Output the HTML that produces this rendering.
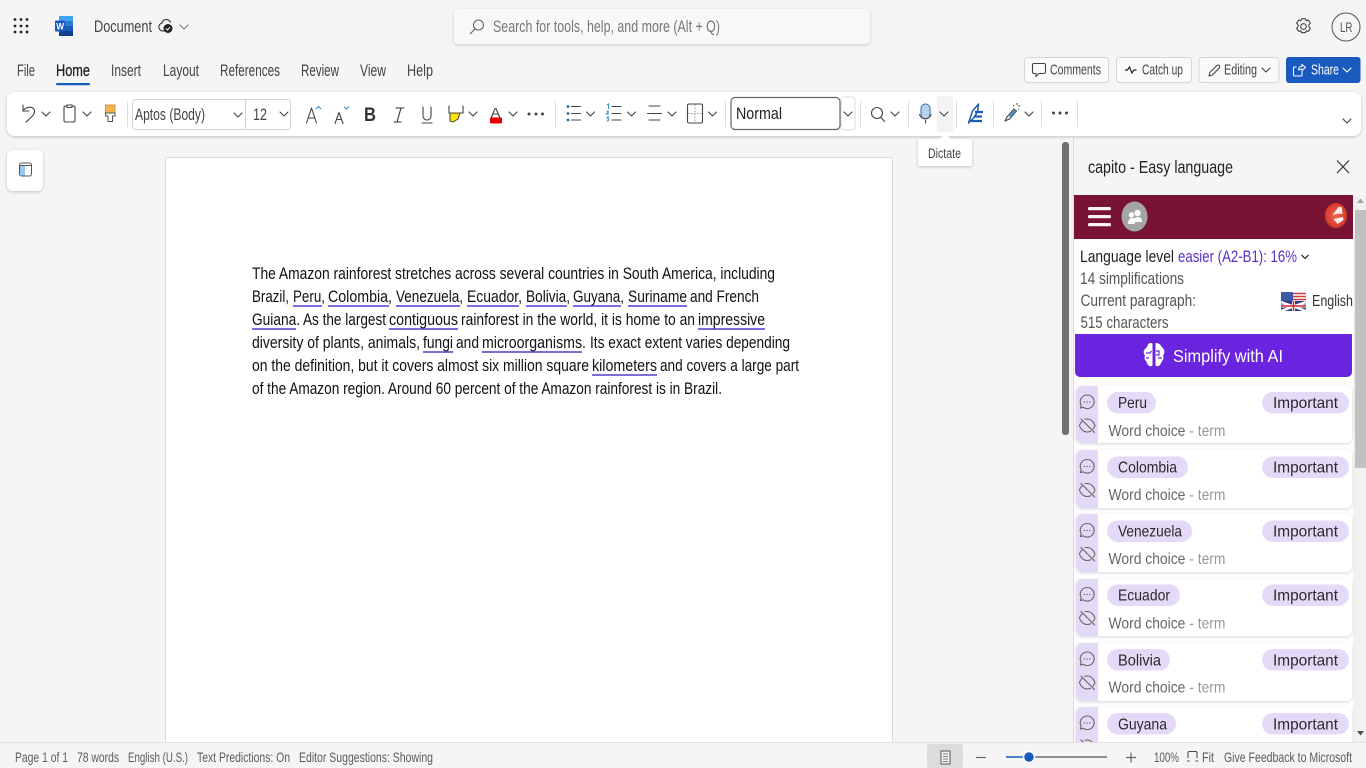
<!DOCTYPE html>
<html lang="en"><head><meta charset="utf-8"><title>Document</title>
<style>
html,body{margin:0;padding:0;width:1366px;height:768px;overflow:hidden;background:#f5f5f5}
svg{display:block;position:absolute;left:0;top:0}
text{font-family:"Liberation Sans",sans-serif;fill:#333;font-size:15px}
.d text,text.d{font-size:16.8px;fill:#111}
.p text{font-size:16.5px;fill:#555}
.s text{font-size:14px;fill:#5c5c5c}
.i{fill:none;stroke:#444;stroke-width:1.1;stroke-linecap:round;stroke-linejoin:round}
.ch{fill:none;stroke:#444;stroke-width:1.1;stroke-linecap:round;stroke-linejoin:round}
</style></head><body>
<svg width="1366" height="768" viewBox="0 0 1366 768" xmlns="http://www.w3.org/2000/svg">
<defs>
<filter id="sh" x="-5%" y="-30%" width="110%" height="170%"><feDropShadow dx="0" dy="1" stdDeviation="1.6" flood-color="#000" flood-opacity=".22"/></filter>
<filter id="sc" x="-10%" y="-20%" width="120%" height="150%"><feDropShadow dx="0" dy="1" stdDeviation="1.6" flood-color="#000" flood-opacity=".18"/></filter>
<radialGradient id="lg" cx=".5" cy=".5" r=".6"><stop offset="0" stop-color="#ee6a50"/><stop offset="1" stop-color="#d22f25"/></radialGradient>
<path id="c" d="M-4 -2L0 2L4 -2"/>
<g id="cardicons" fill="none" stroke="#666" stroke-width="1.1" stroke-linecap="round" stroke-linejoin="round">
<path d="M1087 395a6.800 6.800 0 1 1-3.700 12.300l-2.900.8.800-2.900a6.800 6.800 0 0 1 5.800-10.200z"/>
<path d="M1084 402h.6M1086.800 402h.6M1089.600 402h.6"/>
<path d="M1081 419l13.500 13.500M1082 421.500c-1.200 1.100-2.100 2.400-2.600 4 1.300 3.800 4.300 6.500 7.800 6.500 1.300 0 2.500-.3 3.600-.9M1085 419.200c.7-.2 1.400-.2 2.200-.2 3.500 0 6.500 2.600 7.800 6.500-.4 1.300-1.100 2.500-2 3.500"/>
</g>
</defs>

<!-- top bar -->
<g fill="#222"><circle cx="15" cy="19.500" r="1.400"/><circle cx="21" cy="19.500" r="1.400"/><circle cx="27" cy="19.500" r="1.400"/><circle cx="15" cy="26" r="1.400"/><circle cx="21" cy="26" r="1.400"/><circle cx="27" cy="26" r="1.400"/><circle cx="15" cy="32" r="1.400"/><circle cx="21" cy="32" r="1.400"/><circle cx="27" cy="32" r="1.400"/></g>
<rect x="59" y="16" width="14" height="20" rx="1.500" fill="#2b7cd3"/><rect x="59" y="16" width="14" height="5" fill="#41a5ee"/><rect x="59" y="26" width="14" height="5" fill="#185abd"/><rect x="59" y="31" width="14" height="5" fill="#103f91"/>
<rect x="55" y="20.500" width="10" height="11" rx="1" fill="#185abd"/><text x="56.200" y="29.500" style="fill:#fff;font-size:9px;font-weight:bold" textLength="7.800" lengthAdjust="spacingAndGlyphs">W</text>
<text x="94" y="32" textLength="58" lengthAdjust="spacingAndGlyphs" style="font-size:16.500px;fill:#444">Document</text>
<path class="i" d="M165 31h-2.500a4 4 0 0 1-.5-7.900 4.500 4.500 0 0 1 8.500-.9" style="stroke:#333"/><circle cx="168" cy="28.500" r="4.500" fill="#222"/><path d="M166 28.500l1.500 1.500 2.500-2.800" stroke="#fff" fill="none" stroke-width="1"/>
<use href="#c" x="184" y="27" class="ch" style="stroke:#777"/>

<rect x="454" y="9" width="416" height="35" rx="4" fill="#f8f8f8" filter="url(#sc)"/>
<circle cx="478.500" cy="25" r="5" class="i" style="stroke:#666"/><path class="i" style="stroke:#666" d="M475 29l-4.700 4.700"/>
<text x="493" y="32" textLength="227" lengthAdjust="spacingAndGlyphs" style="fill:#777;font-size:16.500px">Search for tools, help, and more (Alt + Q)</text>

<g transform="translate(1303.500 26.500)" class="i"><circle r="2.800"/><path d="M-2 -7.700h4l.7 2 1.900-.8 2.300 3.100-1.500 1.600.0 2.100 1.500 1.600-2.300 3.100-1.900-.8-.7 2h-4l-.7-2-1.900.8-2.300-3.100 1.500-1.600v-2.100l-1.500-1.600 2.300-3.100 1.900.8z"/></g>
<circle cx="1346" cy="27" r="14" fill="none" stroke="#555"/>
<text x="1340" y="32" textLength="12.500" lengthAdjust="spacingAndGlyphs" style="font-size:14px;fill:#555">LR</text>

<!-- tabs -->
<g>
<text x="17" y="76" textLength="18" lengthAdjust="spacingAndGlyphs" style="font-size:16.500px;fill:#444">File</text>
<text x="56" y="76" textLength="34" lengthAdjust="spacingAndGlyphs" style="font-size:16.500px;fill:#222;stroke:#222;stroke-width:.3">Home</text>
<text x="111" y="76" textLength="30" lengthAdjust="spacingAndGlyphs" style="font-size:16.500px;fill:#444">Insert</text>
<text x="163" y="76" textLength="36" lengthAdjust="spacingAndGlyphs" style="font-size:16.500px;fill:#444">Layout</text>
<text x="220" y="76" textLength="60" lengthAdjust="spacingAndGlyphs" style="font-size:16.500px;fill:#444">References</text>
<text x="301" y="76" textLength="38" lengthAdjust="spacingAndGlyphs" style="font-size:16.500px;fill:#444">Review</text>
<text x="360" y="76" textLength="26" lengthAdjust="spacingAndGlyphs" style="font-size:16.500px;fill:#444">View</text>
<text x="407" y="76" textLength="26" lengthAdjust="spacingAndGlyphs" style="font-size:16.500px;fill:#444">Help</text>
</g>
<rect x="56" y="83" width="34" height="2.200" rx="1" fill="#185abd"/>

<!-- action buttons -->
<g fill="#fafafa" stroke="#d6d6d6"><rect x="1024.500" y="57.500" width="84" height="25" rx="3"/><rect x="1116.500" y="57.500" width="75" height="25" rx="3"/><rect x="1199" y="57.500" width="80" height="25" rx="3"/></g>
<rect x="1286" y="57" width="74.500" height="26" rx="3" fill="#185abd"/>
<path class="i" d="M1034 64h10a1.500 1.500 0 0 1 1.500 1.500v7a1.500 1.500 0 0 1-1.500 1.500h-5l-3 3v-3h-2a1.500 1.500 0 0 1-1.500-1.500v-7a1.500 1.500 0 0 1 1.500-1.500z" transform="translate(0 -0.500)"/>
<text x="1050" y="74.500" textLength="51" lengthAdjust="spacingAndGlyphs" style="font-size:14.500px;fill:#444">Comments</text>
<path d="M1125 70h2.500l2-3 2.500 6 2-3h2.500" fill="none" stroke="#222" stroke-width="1.200"/>
<text x="1142" y="74.500" textLength="41" lengthAdjust="spacingAndGlyphs" style="font-size:14.500px;fill:#444">Catch up</text>
<path class="i" d="M1209 76l.8-3.500 7-7a1.700 1.700 0 0 1 2.500 2.500l-7 7z"/>
<text x="1224" y="74.500" textLength="33" lengthAdjust="spacingAndGlyphs" style="font-size:14.500px;fill:#444">Editing</text>
<use href="#c" x="1266" y="70" class="ch"/>
<path d="M1302 70v5a1 1 0 0 1-1 1h-6.500a1 1 0 0 1-1-1v-7a1 1 0 0 1 1-1h2M1298.500 69.500c0-2 1.500-3.300 3.500-3.300v-1.700l3.500 3-3.500 3v-1.500c-1.500 0-2.800.4-3.500 1.500" fill="none" stroke="#fff" stroke-width="1"/>
<text x="1311" y="74.500" textLength="28" lengthAdjust="spacingAndGlyphs" style="font-size:14.500px;fill:#fff">Share</text>
<use href="#c" x="1347" y="70" class="ch" style="stroke:#fff"/>

<!-- ribbon -->
<rect x="7" y="92" width="1354" height="44" rx="8" fill="#fff" filter="url(#sh)"/>
<path class="i" d="M23 105v6h6M23 111c3-4.500 10-5.500 11.500-.5 1 4-5 8-8.500 11.500"/>
<use href="#c" x="46" y="114" class="ch"/>
<rect x="64" y="106" width="11" height="16" rx="1.500" class="i"/><rect x="67" y="105" width="5" height="2.500" class="i" style="fill:#fff"/>
<use href="#c" x="87" y="114" class="ch"/>
<rect x="105.500" y="105" width="9.500" height="8" fill="#f5b556" stroke="#c98a2a" stroke-width=".8"/><path d="M105.500 113h9.500v3h-2.500v5.500h-4.500v-5.500h-2.500z" fill="#fff" stroke="#555"/>
<path d="M127.500 101v26" stroke="#ddd"/>
<rect x="132.500" y="99.500" width="158" height="30" rx="3" fill="#fff" stroke="#d4d4d4"/><path d="M245.500 100v29" stroke="#d4d4d4"/>
<text x="135" y="120" textLength="70" lengthAdjust="spacingAndGlyphs" style="font-size:16.500px;fill:#444">Aptos (Body)</text>
<use href="#c" x="238" y="115" class="ch"/>
<text x="253" y="120" textLength="14" lengthAdjust="spacingAndGlyphs" style="font-size:16.500px;fill:#444">12</text>
<use href="#c" x="284" y="114" class="ch"/>
<path class="i" d="M306.500 123l5-15 5 15M308.500 118h6"/><path d="M316 109l2.500-2.500 2.500 2.500" fill="none" stroke="#3a8fc7"/>
<path class="i" d="M335 123.500l4-11 4 11M336.500 119.500h5"/><path d="M344 106.500l2.500 2.500 2.500-2.500" fill="none" stroke="#3a8fc7"/>
<text x="364" y="121" textLength="12" lengthAdjust="spacingAndGlyphs" style="font-size:19px;font-weight:bold;fill:#333">B</text>
<path class="i" d="M396 108h8M394 122h7M401 108l-4 14" style="stroke:#333"/>
<path class="i" d="M423 107v9a4 4 0 0 0 8 0v-9M422 123h10"/>
<path class="i" d="M449 106v7h14v-7"/><path d="M450 113h10l-2 6-5 3-3-1z" fill="#ffe600" stroke="#444"/>
<use href="#c" x="473" y="114" class="ch"/>
<text x="490.500" y="117.500" textLength="10" lengthAdjust="spacingAndGlyphs" style="font-size:13.500px;fill:#444">A</text><rect x="490" y="117.500" width="12" height="6" rx="1" fill="#e60000"/>
<use href="#c" x="513" y="114" class="ch"/>
<g fill="#444"><circle cx="529" cy="114" r="1.500"/><circle cx="536" cy="114" r="1.500"/><circle cx="542.500" cy="114" r="1.500"/></g>
<path d="M555.500 101v26" stroke="#ddd"/>
<g fill="#1e6fa8"><circle cx="568" cy="106.500" r="1.400"/><circle cx="568" cy="113.500" r="1.400"/><circle cx="568" cy="120" r="1.400"/></g>
<path class="i" d="M571.500 106.500h9M571.500 113.500h9M571.500 120h9"/>
<use href="#c" x="590.500" y="114" class="ch"/>
<path d="M607 105l1.500-1v5M606.500 111.500c1-1 2.500 0 1.500 1l-1.500 1.500h2.500M606.500 117h2l-1 1.500c1.500 0 1.500 3-.9 2.500" fill="none" stroke="#3a8fc7" stroke-width="1.100"/>
<path class="i" d="M612 106.500h9M612 113.500h9M612 120h9"/>
<use href="#c" x="631.500" y="114" class="ch"/>
<path class="i" d="M649 106h11M647.500 113.500h14M649 120h11"/>
<use href="#c" x="672" y="114" class="ch"/>
<rect x="687.500" y="104" width="15" height="19" rx="1.500" class="i"/><path d="M688 113.500h14M695 104.500v18" stroke="#999" stroke-dasharray="1.500 1.500" fill="none"/>
<use href="#c" x="712.500" y="114" class="ch"/>
<path d="M725.500 101v26" stroke="#ddd"/>
<rect x="841" y="97" width="14" height="33" rx="3" fill="#fff" stroke="#ddd"/>
<rect x="731" y="97.500" width="109" height="32" rx="4" fill="#fff" stroke="#666" stroke-width="1.200"/>
<text x="736" y="119" textLength="46" lengthAdjust="spacingAndGlyphs" style="font-size:16.500px;fill:#222">Normal</text>
<use href="#c" x="848" y="114" class="ch"/>
<path d="M860.500 101v26" stroke="#ddd"/>
<circle cx="877" cy="113" r="5.500" class="i"/><path class="i" d="M881 117.500l3.500 4"/>
<use href="#c" x="895" y="114" class="ch"/>
<path d="M908.500 101v26" stroke="#ddd"/>
<rect x="921" y="104" width="9" height="15" rx="4.500" fill="#b7d3ec" stroke="#2b6cb8"/><path class="i" d="M919.500 114.500a6 6 0 0 0 11.500 0M925.500 120.500v2.500"/>
<rect x="937" y="96" width="16" height="36" fill="#f3f3f3"/>
<use href="#c" x="944" y="114" class="ch"/>
<path d="M956.500 101v26" stroke="#ddd"/>
<path d="M968.500 123l4-12 6-7-1 8-4 6z" fill="none" stroke="#1e5cb3" stroke-width="1.500" stroke-linejoin="round"/>
<path d="M975 112h8M974 116.500h8M971 121h11" fill="none" stroke="#1e5cb3" stroke-width="2.200"/>
<path d="M993.500 101v26" stroke="#ddd"/>
<path class="i" d="M1005 121l2-4 7-8 2.500 2-7 8z"/><path d="M1009 116l5-6 1.800 1.500-5 6z" fill="#3a8fc7"/><path d="M1017 103v2M1020 106h-2M1013 105l1 1M1018 109l1 .5" stroke="#444" fill="none"/>
<use href="#c" x="1029" y="114" class="ch"/>
<path d="M1041.500 101v26" stroke="#ddd"/>
<g fill="#444"><circle cx="1053.500" cy="113" r="1.500"/><circle cx="1060" cy="113" r="1.500"/><circle cx="1066.500" cy="113" r="1.500"/></g>
<path d="M1077.500 101v26" stroke="#ddd"/>
<use href="#c" x="1347" y="121" class="ch"/>

<!-- nav pane button -->
<rect x="7" y="150" width="36" height="41" rx="6" fill="#fff" filter="url(#sh)"/>
<rect x="19.500" y="163" width="12" height="13" rx="2" fill="#fff" stroke="#555"/><rect x="20" y="166" width="5" height="9.500" fill="#9cc8ee"/><path d="M20 165.500h11" stroke="#555"/>

<!-- page -->
<rect x="165.500" y="157.500" width="727" height="600" rx="2" fill="#fff" stroke="#dcdcdc"/>
<g class="d">
<text x="252" y="279" textLength="523" lengthAdjust="spacingAndGlyphs">The Amazon rainforest stretches across several countries in South America, including</text>
<text x="252" y="302" textLength="37" lengthAdjust="spacingAndGlyphs">Brazil,</text>
<text x="293" y="302" textLength="32" lengthAdjust="spacingAndGlyphs">Peru,</text>
<text x="328" y="302" textLength="64" lengthAdjust="spacingAndGlyphs">Colombia,</text>
<text x="396" y="302" textLength="67" lengthAdjust="spacingAndGlyphs">Venezuela,</text>
<text x="467" y="302" textLength="55" lengthAdjust="spacingAndGlyphs">Ecuador,</text>
<text x="526" y="302" textLength="44" lengthAdjust="spacingAndGlyphs">Bolivia,</text>
<text x="573" y="302" textLength="51" lengthAdjust="spacingAndGlyphs">Guyana,</text>
<text x="628" y="302" textLength="59" lengthAdjust="spacingAndGlyphs">Suriname</text>
<text x="690" y="302" textLength="69" lengthAdjust="spacingAndGlyphs">and French</text>
<text x="252" y="325" textLength="48" lengthAdjust="spacingAndGlyphs">Guiana.</text>
<text x="303" y="325" textLength="83" lengthAdjust="spacingAndGlyphs">As the largest</text>
<text x="389" y="325" textLength="69" lengthAdjust="spacingAndGlyphs">contiguous</text>
<text x="461" y="325" textLength="234" lengthAdjust="spacingAndGlyphs">rainforest in the world, it is home to an</text>
<text x="698" y="325" textLength="67" lengthAdjust="spacingAndGlyphs">impressive</text>
<text x="252" y="348" textLength="168" lengthAdjust="spacingAndGlyphs">diversity of plants, animals,</text>
<text x="423" y="348" textLength="30" lengthAdjust="spacingAndGlyphs">fungi</text>
<text x="456" y="348" textLength="23" lengthAdjust="spacingAndGlyphs">and</text>
<text x="482" y="348" textLength="104" lengthAdjust="spacingAndGlyphs">microorganisms.</text>
<text x="590" y="348" textLength="200" lengthAdjust="spacingAndGlyphs">Its exact extent varies depending</text>
<text x="252" y="371" textLength="337" lengthAdjust="spacingAndGlyphs">on the definition, but it covers almost six million square</text>
<text x="592" y="371" textLength="65" lengthAdjust="spacingAndGlyphs">kilometers</text>
<text x="660" y="371" textLength="139" lengthAdjust="spacingAndGlyphs">and covers a large part</text>
<text x="252" y="394" textLength="470" lengthAdjust="spacingAndGlyphs">of the Amazon region. Around 60 percent of the Amazon rainforest is in Brazil.</text>
</g>
<g stroke="#4f3fd0" stroke-width="1.500" fill="none">
<path d="M293 306h29M328 306h61M396 306h64M467 306h52M526 306h41M573 306h48M628 306h59"/>
<path d="M252 329h44M389 329h69M698 329h67"/>
<path d="M423 352h30M482 352h100"/>
<path d="M592 375h65"/>
</g>

<!-- doc scrollbar -->
<rect x="1062" y="142" width="7" height="293" rx="3" fill="#707070"/>
<path d="M1073.500 137v606" stroke="#dcdcdc"/>

<!-- tooltip -->
<rect x="918" y="139" width="54" height="27" rx="1.500" fill="#fff" filter="url(#sh)"/>
<path d="M945 133l6 6.500h-12z" fill="#fff"/>
<text x="928" y="158" textLength="33" lengthAdjust="spacingAndGlyphs" style="font-size:13.500px;fill:#444">Dictate</text>

<!-- side panel -->
<text x="1088" y="173" textLength="145" lengthAdjust="spacingAndGlyphs" style="font-size:17.500px;fill:#222">capito - Easy language</text>
<path d="M1337 160.500l12 12.500M1349 160.500l-12 12.500" fill="none" stroke="#333" stroke-width="1.200"/>
<rect x="1074" y="195" width="279" height="548" fill="#fff"/>
<rect x="1354" y="195" width="12" height="548" fill="#f1f1f1"/>
<rect x="1355" y="210" width="11" height="258" fill="#c1c1c1"/>
<path d="M1360.500 198.500l3.500 4.500h-7z" fill="#a3a3a3"/><path d="M1360.500 735.500l3.500-4.500h-7z" fill="#505050"/>
<rect x="1074" y="195" width="279" height="44" fill="#781334"/>
<g fill="#fff" opacity=".95"><rect x="1088" y="207" width="23" height="3.300" rx="1.600"/><rect x="1088" y="215" width="23" height="3.300" rx="1.600"/><rect x="1088" y="223" width="23" height="3.300" rx="1.600"/></g>
<ellipse cx="1134.500" cy="216.500" rx="13" ry="15" fill="#a5a5a5"/>
<circle cx="1137.500" cy="213" r="3.200" fill="#fff"/><circle cx="1131.500" cy="215" r="2.700" fill="#fff"/><path d="M1128 224c0-4 2-6 4-6s2 1 2 1 1-2 4-2 4 2 4 5h-7c0 1 0 2-.5 2z" fill="#fff"/>
<ellipse cx="1336" cy="215.500" rx="11" ry="12.500" fill="url(#lg)"/>
<path d="M1332.500 215l6.500-8.500 3 1 .5 6.500-4.500-.5zM1333.500 219l9.500-2 .5 3-6 4z" fill="#fdecea"/>

<text x="1080" y="262" textLength="94" lengthAdjust="spacingAndGlyphs" style="font-size:16.500px;fill:#222">Language level</text>
<text x="1178" y="262" textLength="119" lengthAdjust="spacingAndGlyphs" style="font-size:16.500px;fill:#5b2fc9">easier (A2-B1): 16%</text>
<path d="M1301.500 255l3.500 3.500 3.500-3.500" fill="none" stroke="#333" stroke-width="1.300"/>
<g class="p">
<text x="1080" y="284" textLength="104" lengthAdjust="spacingAndGlyphs">14 simplifications</text>
<text x="1080.500" y="306" textLength="115.500" lengthAdjust="spacingAndGlyphs">Current paragraph:</text>
<text x="1080.500" y="328" textLength="88" lengthAdjust="spacingAndGlyphs">515 characters</text>
</g>
<rect x="1281" y="292" width="25" height="19" fill="#fff"/>
<rect x="1281" y="292" width="12" height="9" fill="#3c5aa6"/>
<path d="M1293 293.500h13M1293 296.500h13M1293 299.500h13" stroke="#d23b3b" stroke-width="1.500"/>
<rect x="1281" y="301" width="25" height="10" fill="#2a3a85"/>
<path d="M1281 311l25-9M1306 311l-25-9" stroke="#fff" stroke-width="2.500"/><path d="M1293.500 301v10M1281 306h25" stroke="#fff" stroke-width="3"/><path d="M1293.500 301v10M1281 306h25" stroke="#d0232b" stroke-width="1.500"/>
<text x="1312" y="306" textLength="41" lengthAdjust="spacingAndGlyphs" style="font-size:16px;fill:#333">English</text>

<path d="M1075 334h277v38a5 5 0 0 1-5 5h-267a5 5 0 0 1-5-5z" fill="#6a23df"/>
<path d="M1151.500 343c-5 0-3 3-5 4.500-3.500 3-3.500 5-1.500 8-1.500 4 1 5 1.500 6.500 1 3 3 5 5 4 1 0 1-1 1-2v-19c0-1 0-2-1-2zM1155.500 343c5 0 5 3 7 4.500 2.500 3 2.500 5 .5 8 1.500 4-1 5-1.500 6.500-1 3-3 5-5 4-1 0-1-1-1-2v-19c0-1 0-2 0-2z" fill="#fff"/>
<path d="M1146 353h4l1.500-2M1146 358h3M1156 351h3v4h-3M1162 358h-4" stroke="#6a23df" stroke-width="1.200" fill="none"/>
<text x="1173" y="362" textLength="110" lengthAdjust="spacingAndGlyphs" style="font-size:17.500px;fill:#fff">Simplify with AI</text>

<!-- cards -->
<g>
<rect x="1076" y="386" width="276" height="57" rx="6" fill="#fff" filter="url(#sc)"/><path d="M1082 386h16v57h-16a6 6 0 0 1-6-6v-45a6 6 0 0 1 6-6z" fill="#e4daf7"/>
<rect x="1076" y="450" width="276" height="58" rx="6" fill="#fff" filter="url(#sc)"/><path d="M1082 450h16v58h-16a6 6 0 0 1-6-6v-46a6 6 0 0 1 6-6z" fill="#e4daf7"/>
<rect x="1076" y="514" width="276" height="58" rx="6" fill="#fff" filter="url(#sc)"/><path d="M1082 514h16v58h-16a6 6 0 0 1-6-6v-46a6 6 0 0 1 6-6z" fill="#e4daf7"/>
<rect x="1076" y="579" width="276" height="57" rx="6" fill="#fff" filter="url(#sc)"/><path d="M1082 579h16v57h-16a6 6 0 0 1-6-6v-45a6 6 0 0 1 6-6z" fill="#e4daf7"/>
<rect x="1076" y="643" width="276" height="58" rx="6" fill="#fff" filter="url(#sc)"/><path d="M1082 643h16v58h-16a6 6 0 0 1-6-6v-46a6 6 0 0 1 6-6z" fill="#e4daf7"/>
<rect x="1076" y="707" width="276" height="58" rx="6" fill="#fff" filter="url(#sc)"/><path d="M1082 707h16v58h-16a6 6 0 0 1-6-6v-46a6 6 0 0 1 6-6z" fill="#e4daf7"/>
</g>
<use href="#cardicons"/><use href="#cardicons" y="64.500"/><use href="#cardicons" y="128.500"/><use href="#cardicons" y="192.500"/><use href="#cardicons" y="257"/><use href="#cardicons" y="321"/>
<g fill="#e4daf7">
<rect x="1107" y="392" width="49" height="21.500" rx="10.700"/><rect x="1262" y="392" width="87" height="21.500" rx="10.700"/>
<rect x="1107" y="456.500" width="81" height="21.500" rx="10.700"/><rect x="1262" y="456.500" width="87" height="21.500" rx="10.700"/>
<rect x="1107" y="520.500" width="85" height="21.500" rx="10.700"/><rect x="1262" y="520.500" width="87" height="21.500" rx="10.700"/>
<rect x="1107" y="584.500" width="73" height="21.500" rx="10.700"/><rect x="1262" y="584.500" width="87" height="21.500" rx="10.700"/>
<rect x="1107" y="649" width="63" height="21.500" rx="10.700"/><rect x="1262" y="649" width="87" height="21.500" rx="10.700"/>
<rect x="1107" y="713" width="69" height="21.500" rx="10.700"/><rect x="1262" y="713" width="87" height="21.500" rx="10.700"/>
</g>
<g>
<text x="1118" y="408" textLength="29" lengthAdjust="spacingAndGlyphs" style="font-size:16px;fill:#2a2a2a">Peru</text>
<text x="1118" y="472.500" textLength="59" lengthAdjust="spacingAndGlyphs" style="font-size:16px;fill:#2a2a2a">Colombia</text>
<text x="1118" y="536.500" textLength="64" lengthAdjust="spacingAndGlyphs" style="font-size:16px;fill:#2a2a2a">Venezuela</text>
<text x="1118" y="600.500" textLength="52" lengthAdjust="spacingAndGlyphs" style="font-size:16px;fill:#2a2a2a">Ecuador</text>
<text x="1118" y="665.500" textLength="43" lengthAdjust="spacingAndGlyphs" style="font-size:16px;fill:#2a2a2a">Bolivia</text>
<text x="1118" y="729.500" textLength="49" lengthAdjust="spacingAndGlyphs" style="font-size:16px;fill:#2a2a2a">Guyana</text>
<text x="1273" y="408" textLength="65" lengthAdjust="spacingAndGlyphs" style="font-size:16px;fill:#2a2a2a">Important</text>
<text x="1273" y="472.500" textLength="65" lengthAdjust="spacingAndGlyphs" style="font-size:16px;fill:#2a2a2a">Important</text>
<text x="1273" y="536.500" textLength="65" lengthAdjust="spacingAndGlyphs" style="font-size:16px;fill:#2a2a2a">Important</text>
<text x="1273" y="600.500" textLength="65" lengthAdjust="spacingAndGlyphs" style="font-size:16px;fill:#2a2a2a">Important</text>
<text x="1273" y="665.500" textLength="65" lengthAdjust="spacingAndGlyphs" style="font-size:16px;fill:#2a2a2a">Important</text>
<text x="1273" y="729.500" textLength="65" lengthAdjust="spacingAndGlyphs" style="font-size:16px;fill:#2a2a2a">Important</text>
</g>
<g>
<text x="1108.500" y="436" textLength="117" lengthAdjust="spacingAndGlyphs" style="font-size:16px;fill:#666">Word choice <tspan style="fill:#999">- term</tspan></text>
<text x="1108.500" y="500" textLength="117" lengthAdjust="spacingAndGlyphs" style="font-size:16px;fill:#666">Word choice <tspan style="fill:#999">- term</tspan></text>
<text x="1108.500" y="564" textLength="117" lengthAdjust="spacingAndGlyphs" style="font-size:16px;fill:#666">Word choice <tspan style="fill:#999">- term</tspan></text>
<text x="1108.500" y="628.500" textLength="117" lengthAdjust="spacingAndGlyphs" style="font-size:16px;fill:#666">Word choice <tspan style="fill:#999">- term</tspan></text>
<text x="1108.500" y="692.500" textLength="117" lengthAdjust="spacingAndGlyphs" style="font-size:16px;fill:#666">Word choice <tspan style="fill:#999">- term</tspan></text>
</g>

<!-- status bar -->
<rect x="0" y="742" width="1366" height="26" fill="#f5f5f5"/><path d="M0 742.500h1366" stroke="#e2e2e2"/>
<g class="s">
<text x="15" y="762" textLength="53" lengthAdjust="spacingAndGlyphs">Page 1 of 1</text>
<text x="77" y="762" textLength="42" lengthAdjust="spacingAndGlyphs">78 words</text>
<text x="128" y="762" textLength="60" lengthAdjust="spacingAndGlyphs">English (U.S.)</text>
<text x="197" y="762" textLength="93" lengthAdjust="spacingAndGlyphs">Text Predictions: On</text>
<text x="299" y="762" textLength="134" lengthAdjust="spacingAndGlyphs">Editor Suggestions: Showing</text>
<text x="1154" y="762" textLength="25" lengthAdjust="spacingAndGlyphs">100%</text>
<text x="1202" y="762" textLength="12" lengthAdjust="spacingAndGlyphs">Fit</text>
<text x="1224" y="762" textLength="128" lengthAdjust="spacingAndGlyphs">Give Feedback to Microsoft</text>
</g>
<rect x="927" y="744" width="36" height="24" rx="2" fill="#dcdcdc"/>
<rect x="941" y="751" width="9" height="13" fill="#f5f5f5" stroke="#555"/><path d="M943 754h5M943 756.500h5M943 759h5M943 761.500h5" stroke="#555" fill="none" stroke-width=".8"/>
<path d="M976 757.500h10" stroke="#666" stroke-width="1.200"/>
<path d="M1006 757h22" stroke="#185abd" stroke-width="1.500"/><path d="M1030 757h77" stroke="#555" stroke-width="1.200"/>
<circle cx="1029" cy="757" r="5.500" fill="#185abd" stroke="#fff" stroke-width="1.500"/>
<path d="M1126 757.500h10M1131 752.500v10" stroke="#666" stroke-width="1.200"/>
<path d="M1188 758v-5a1.500 1.500 0 0 1 1.500-1.500h6a1.500 1.500 0 0 1 1.500 1.500v5M1187 761h2.500M1195.500 761h2.500" fill="none" stroke="#444" stroke-width="1"/>
</svg>
</body></html>
